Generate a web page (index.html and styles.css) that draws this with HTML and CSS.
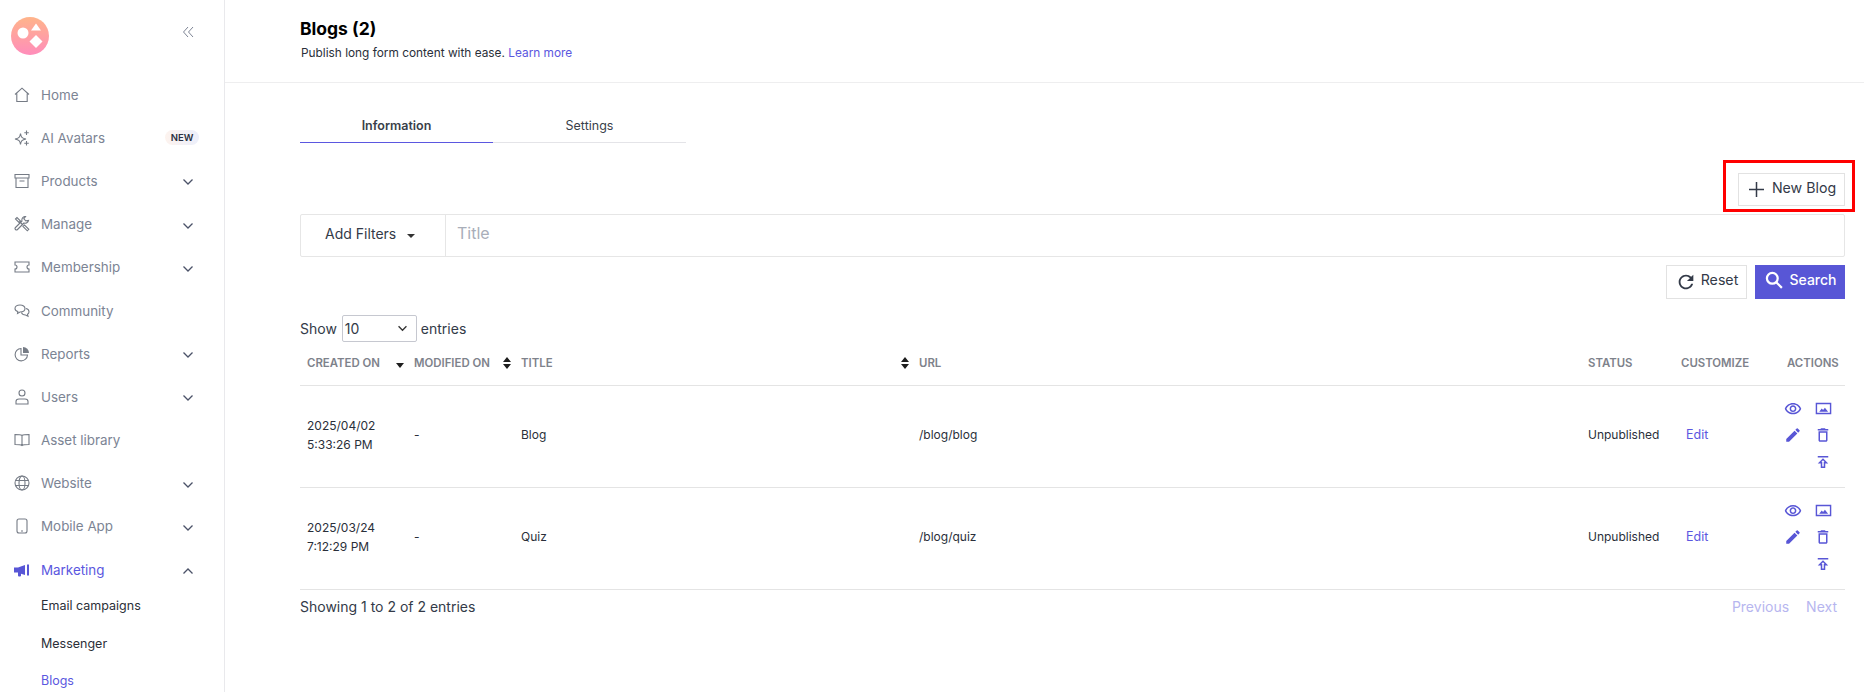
FILE: index.html
```html
<!DOCTYPE html>
<html lang="en">
<head>
<meta charset="utf-8">
<title>Blogs</title>
<link rel="stylesheet" href="styles.css">
</head>
<body>
<svg width="0" height="0" class="defs">
  <symbol id="chev-d" viewBox="0 0 12 8"><path d="M1.500 1.500 6 6l4.500-4.500" fill="none" stroke="#4b5268" stroke-width="1.300"/></symbol>
  <symbol id="chev-u" viewBox="0 0 12 8"><path d="M1.500 6.500 6 2l4.500 4.500" fill="none" stroke="#4b5268" stroke-width="1.300"/></symbol>
  <symbol id="eye" viewBox="0 0 24 24"><path d="M12 6c3.790 0 7.170 2.130 8.820 5.500C19.170 14.870 15.790 17 12 17s-7.170-2.130-8.820-5.500C4.830 8.130 8.210 6 12 6m0-2C7 4 2.730 7.110 1 11.500 2.730 15.890 7 19 12 19s9.270-3.110 11-7.500C21.270 7.110 17 4 12 4zm0 5c1.380 0 2.500 1.120 2.500 2.500S13.380 14 12 14s-2.500-1.120-2.500-2.500S10.620 9 12 9m0-2c-2.480 0-4.500 2.020-4.500 4.500S9.520 16 12 16s4.500-2.020 4.500-4.500S14.480 7 12 7z"/></symbol>
  <symbol id="pano" viewBox="0 0 24 24"><path d="M23 4H1v16h22zm-2 14H3V6h18zM14 11l-2.600 3.200L9.500 12 6 16.500h12.500z"/></symbol>
  <symbol id="edit" viewBox="0 0 24 24"><path d="M3 17.250V21h3.750L17.810 9.940l-3.750-3.750L3 17.250zM20.710 7.040a.996.996 0 000-1.410l-2.340-2.340a.996.996 0 00-1.410 0l-1.830 1.830 3.750 3.750 1.830-1.830z"/></symbol>
  <symbol id="trash" viewBox="0 0 24 24"><path d="M16 9v10H8V9h8m-1.500-6h-5l-1 1H5v2h14V4h-3.500l-1-1zM18 7H6v12c0 1.100.9 2 2 2h8c1.100 0 2-.9 2-2V7z"/></symbol>
  <symbol id="pub" viewBox="0 0 24 24"><path d="M5 4h14v2H5zm0 10h4v6h6v-6h4l-7-7-7 7zm8-2v6h-2v-6H9.830L12 9.830 14.170 12H13z"/></symbol>
  <symbol id="sort" viewBox="0 0 8 12"><path d="M4 0 8 5H0zM0 7h8l-4 5z"/></symbol>
</svg>

<div class="app">
  <aside class="sidebar">
    <div class="brand">
      <svg class="logo" viewBox="0 0 38 38">
        <defs><linearGradient id="lg" x1="0" y1="0" x2="0" y2="1"><stop offset="0" stop-color="#ffb48a"/><stop offset="1" stop-color="#ff8dbb"/></linearGradient></defs>
        <circle cx="19" cy="19" r="19" fill="url(#lg)"/>
        <circle cx="12" cy="16" r="5.500" fill="#fff"/>
        <path d="M25 6.500 30 13.500H20z" fill="#fff"/>
        <path d="M25 18 31.500 24.500 25 31 18.500 24.500z" fill="#fff"/>
      </svg>
      <svg class="collapse" viewBox="0 0 12 12"><path d="M6 1 1.500 6 6 11M11 1 6.500 6 11 11" fill="none" stroke="#7d8494" stroke-width="1"/></svg>
    </div>
    <nav class="nav">
      <a class="nav-item"><svg class="ni" viewBox="0 0 16 16"><path d="M1 7.500 8 1.200l7 6.300M2.800 6.500v8h10.400v-8"/></svg><span class="nl">Home</span></a>
      <a class="nav-item"><svg class="ni" viewBox="0 0 16 16"><path d="M6.500 3.500C7 7 8 8.300 12 9c-4 .7-5 2-5.500 5.500C6 11 5 9.700 1 9c4-.7 5-2 5.500-5.500zM12.500 .5v4.500M10.300 2.700h4.500M12.500 11v4.500M10.300 13.200h4.500"/></svg><span class="nl">AI Avatars</span><span class="badge">NEW</span></a>
      <a class="nav-item"><svg class="ni" viewBox="0 0 16 16"><path d="M1 1.500h14v3.500H1zM2 5v9.500h12V5M5.500 8h5"/></svg><span class="nl">Products</span><svg class="chev"><use href="#chev-d"/></svg></a>
      <a class="nav-item"><svg class="ni" viewBox="0 0 16 16"><path d="M1.500 3 3 1.500 6.500 5 5 6.500zM6.500 6.500 9 9M9 10.500 10.500 9l4.300 4.300-1.500 1.500zM14.500 4.500a3.500 3.500 0 0 1-4.500 2.500l-6.500 6.500a1.400 1.400 0 0 1-2-2L8 5a3.500 3.500 0 0 1 3.500-4.500L9.800 2.800l2 2z"/></svg><span class="nl">Manage</span><svg class="chev"><use href="#chev-d"/></svg></a>
      <a class="nav-item"><svg class="ni" viewBox="0 0 16 16"><path d="M1 3h14v3a2 2 0 0 0 0 4v3H1v-3a2 2 0 0 0 0-4z"/></svg><span class="nl">Membership</span><svg class="chev"><use href="#chev-d"/></svg></a>
      <a class="nav-item"><svg class="ni" viewBox="0 0 16 16"><path d="M6 2c3 0 5 1.500 5 3.500S9 9 6 9L3.500 10.500 3.800 8.500C2 8 1 7 1 5.500 1 3.500 3 2 6 2zM12 5.500c2 .5 3 1.700 3 3.200 0 1.200-.6 2-1.500 2.600l.5 2-2.500-1.300c-2 0-3.500-.8-4-2.300"/></svg><span class="nl">Community</span></a>
      <a class="nav-item"><svg class="ni" viewBox="0 0 16 16"><path d="M7 2.500a6.200 6.200 0 1 0 6.500 6.500H7z"/><path class="fill" d="M9 1v6h6a6 6 0 0 0-6-6z"/></svg><span class="nl">Reports</span><svg class="chev"><use href="#chev-d"/></svg></a>
      <a class="nav-item"><svg class="ni" viewBox="0 0 16 16"><circle cx="8" cy="4" r="3"/><path d="M2 15v-2.500C2 11 3.500 10 5 10h6c1.500 0 3 1 3 2.500V15z"/></svg><span class="nl">Users</span><svg class="chev"><use href="#chev-d"/></svg></a>
      <a class="nav-item"><svg class="ni" viewBox="0 0 16 16"><path d="M8 3.500C7 2.800 5.500 2.500 1 2.500v10c4.500 0 6 .3 7 1 1-.7 2.500-1 7-1v-10c-4.500 0-6 .3-7 1zM8 3.500v10"/></svg><span class="nl">Asset library</span></a>
      <a class="nav-item"><svg class="ni" viewBox="0 0 16 16"><circle cx="8" cy="8" r="7"/><ellipse cx="8" cy="8" rx="3" ry="7"/><path d="M1.500 5.500h13M1.500 10.500h13"/></svg><span class="nl">Website</span><svg class="chev"><use href="#chev-d"/></svg></a>
      <a class="nav-item"><svg class="ni" viewBox="0 0 16 16"><rect x="3" y="1" width="10" height="14" rx="2"/><path d="M7 13h2"/></svg><span class="nl">Mobile App</span><svg class="chev"><use href="#chev-d"/></svg></a>
      <a class="nav-item active"><svg class="ni-solid" viewBox="0 0 16 16"><path d="M0 5.500h4L11 3v10L7 11.800v1.700a1 1 0 0 1-1 1H5a1 1 0 0 1-1-1v-3H0zM13 2.500h2v11h-2z"/></svg><span class="nl">Marketing</span><svg class="chev"><use href="#chev-u"/></svg></a>
    </nav>
    <div class="subnav">
      <a class="sub-item">Email campaigns</a>
      <a class="sub-item">Messenger</a>
      <a class="sub-item current">Blogs</a>
    </div>
  </aside>

  <main class="main">
    <header class="page-head">
      <h1>Blogs (2)</h1>
      <p>Publish long form content with ease. <a class="link">Learn more</a></p>
    </header>
    <section class="content">
      <div class="tabs">
        <div class="tab on">Information</div>
        <div class="tab">Settings</div>
      </div>
      <div class="new-row">
        <div class="highlight">
          <button class="btn btn-new"><svg class="plus" viewBox="0 0 14 14"><path d="M7 0v14M0 7h14"/></svg>New Blog</button>
        </div>
      </div>
      <div class="filters">
        <div class="filter-drop">Add Filters<span class="caret"></span></div>
        <div class="filter-input">Title</div>
      </div>
      <div class="filter-actions">
        <button class="btn btn-reset"><svg class="ic-reset" viewBox="0 0 24 24"><path d="M17.650 6.350C16.200 4.900 14.210 4 12 4c-4.420 0-7.990 3.580-7.990 8s3.570 8 7.990 8c3.730 0 6.840-2.550 7.730-6h-2.080c-.82 2.330-3.040 4-5.650 4-3.310 0-6-2.690-6-6s2.690-6 6-6c1.660 0 3.140.69 4.220 1.780L13 11h7V4l-2.350 2.350z"/></svg>Reset</button>
        <button class="btn btn-search"><svg class="ic-search" viewBox="0 0 16 16"><circle cx="6.500" cy="6.500" r="4.800"/><path d="M10 10l5 5"/></svg>Search</button>
      </div>
      <div class="length">Show <span class="select">10<svg viewBox="0 0 12 8"><path d="M1.500 1.500 6 6l4.500-4.500" fill="none" stroke="#333" stroke-width="1.500"/></svg></span> entries</div>
      <table class="grid">
        <colgroup><col class="c1"><col class="c2"><col class="c3"><col class="c4"><col class="c5"><col class="c6"><col class="c7"></colgroup>
        <thead>
          <tr>
            <th><span class="th-in">CREATED ON<span class="sort-down"></span></span></th>
            <th><span class="th-in">MODIFIED ON<svg class="sort"><use href="#sort"/></svg></span></th>
            <th><span class="th-in">TITLE<svg class="sort"><use href="#sort"/></svg></span></th>
            <th>URL</th>
            <th>STATUS</th>
            <th>CUSTOMIZE</th>
            <th>ACTIONS</th>
          </tr>
        </thead>
        <tbody>
          <tr>
            <td>2025/04/02<br>5:33:26 PM</td><td>-</td><td>Blog</td><td>/blog/blog</td><td>Unpublished</td><td><a class="link edit">Edit</a></td>
            <td class="act-cell"><div class="actions">
              <svg class="a-eye"><use href="#eye"/></svg><svg class="a-pano"><use href="#pano"/></svg>
              <svg class="a-ic"><use href="#edit"/></svg><svg class="a-ic"><use href="#trash"/></svg>
              <span></span><svg class="a-ic"><use href="#pub"/></svg>
            </div></td>
          </tr>
          <tr>
            <td>2025/03/24<br>7:12:29 PM</td><td>-</td><td>Quiz</td><td>/blog/quiz</td><td>Unpublished</td><td><a class="link edit">Edit</a></td>
            <td class="act-cell"><div class="actions">
              <svg class="a-eye"><use href="#eye"/></svg><svg class="a-pano"><use href="#pano"/></svg>
              <svg class="a-ic"><use href="#edit"/></svg><svg class="a-ic"><use href="#trash"/></svg>
              <span></span><svg class="a-ic"><use href="#pub"/></svg>
            </div></td>
          </tr>
        </tbody>
      </table>
      <div class="foot">
        <span>Showing 1 to 2 of 2 entries</span>
        <span class="pager"><a>Previous</a><a>Next</a></span>
      </div>
    </section>
  </main>
</div>
</body>
</html>
```
FILE: styles.css
```css
* { box-sizing: border-box; }
html, body { margin: 0; height: 100%; overflow: hidden; background: #fff; }
body { font-family: Inter, "Liberation Sans", sans-serif; font-size: 13px; color: #2a2f3a; }
.defs { position: absolute; }
.app { display: flex; height: 692px; overflow: hidden; }

.sidebar { width: 225px; flex: none; border-right: 1px solid #e9e9ec; height: 692px; overflow: hidden; }
.brand { height: 73px; display: flex; align-items: flex-start; justify-content: space-between; padding: 17px 30px 0 11px; }
.logo { width: 38px; height: 38px; }
.collapse { width: 12px; height: 12px; margin-top: 9px; }
.nav { display: flex; flex-direction: column; }
.nav-item { height: 43.200px; display: flex; align-items: center; padding: 0 30px 0 14px; color: #7c8494; font-size: 13.400px; }
.nl { flex: 1; margin-left: 11px; }
.ni { width: 16px; height: 16px; flex: none; fill: none; stroke: #757b85; stroke-width: 1.100; }
.ni .fill { fill: #757b85; stroke: none; }
.ni-solid { width: 16px; height: 16px; flex: none; fill: #5856d6; }
.chev { width: 12px; height: 8px; flex: none; margin-top: 3px; }
.badge { width: 34px; height: 15px; margin-right: -5px; border-radius: 8px; background: linear-gradient(90deg, #fdf3ee, #eceffb); color: #2b3042; font-size: 9.500px; font-weight: 600; line-height: 15px; text-align: center; }
.active, .active .nl { color: #5b57e0; }
.subnav { display: flex; flex-direction: column; margin-top: -4px; }
.sub-item { height: 37.500px; line-height: 37.500px; padding-left: 41px; font-size: 12.500px; color: #2b2f38; }
.current { color: #5b57e0; }

.main { flex: 1; min-width: 0; }
.page-head { height: 83px; padding: 18px 0 0 76px; border-bottom: 1px solid #eeeeef; }
.page-head h1 { margin: 0 0 0 -1px; font-size: 17.500px; font-weight: 700; line-height: 22px; color: #000; }
.page-head p { margin: 5px 0 0; font-size: 11.850px; line-height: 16px; color: #2a2f3a; }
.link { color: #5b57e0; }
.content { padding: 22px 19px 0 75px; }
.tabs { display: flex; width: 386px; border-bottom: 1px solid #e4e4e8; height: 38px; }
.tab { width: 193px; height: 38px; line-height: 41px; text-align: center; font-size: 12.500px; color: #3a3f4a; }
.tab.on { font-weight: 600; border-bottom: 1.500px solid #5b57e0; }

.new-row { display: flex; justify-content: flex-end; height: 71px; margin-right: -10px; padding-top: 17px; }
.highlight { border: 3px solid #f00; width: 132px; height: 52px; padding: 10px 7px 0 12px; }
.btn { display: inline-flex; align-items: center; justify-content: center; font: inherit; background: #fff; border: 1px solid #e2e2e2; color: #333a48; padding: 0 0 4px; }
.btn svg { margin-top: 4px; }
.btn-new { width: 107px; height: 33px; font-size: 14.200px; padding-left: 2px; padding-bottom: 5px; }
.plus { width: 15px; height: 15px; margin-right: 8px; fill: none; stroke: #333a48; stroke-width: 1.400; }
.filters { display: flex; height: 43px; border: 1px solid #e6e6e6; border-radius: 2px; }
.filter-drop { width: 145px; border-right: 1px solid #e6e6e6; display: flex; align-items: center; padding: 0 0 5px 24px; font-size: 14px; color: #333a48; }
.caret { width: 0; height: 0; margin: 6px 0 0 11px; border-left: 4.500px solid transparent; border-right: 4.500px solid transparent; border-top: 4.500px solid #333; }
.filter-input { flex: 1; display: flex; align-items: center; padding: 0 0 5px 11px; font-size: 16px; color: #a9aeb9; }
.filter-actions { display: flex; justify-content: flex-end; gap: 8px; margin-top: 8px; height: 34px; }
.btn-reset { width: 81px; font-size: 14.200px; padding-bottom: 5px; }
.ic-reset { width: 22px; height: 22px; margin-right: 4px; fill: #333a48; }
.btn-search { width: 90px; font-size: 14px; font-weight: 500; color: #fff; background: #5856d6; border-color: #5856d6; padding-left: 2px; padding-bottom: 5px; }
.btn-search svg { margin-top: 0; }
.ic-search { width: 18px; height: 18px; margin-right: 6px; fill: none; stroke: #fff; stroke-width: 2; }
.length { margin-top: 15px; height: 28px; display: flex; align-items: center; gap: 4px; font-size: 14px; color: #333a48; }
.select { width: 75px; height: 27px; margin: 0 0 0 1px; padding: 0 8px 0 2px; display: flex; align-items: center; justify-content: space-between; border: 1px solid #c6c8d0; border-radius: 2px; }
.select svg { width: 11px; height: 7px; }

.grid { width: 100%; table-layout: fixed; border-collapse: collapse; margin-top: 7px; }
.c1 { width: 107px; } .c2 { width: 107px; } .c3 { width: 398px; } .c4 { width: 669px; }
.c5 { width: 93px; } .c6 { width: 106px; } .c7 { width: 65px; }
th { height: 36px; padding: 0 0 7px 7px; text-align: left; font-size: 11.400px; font-weight: 600; color: #7e828b; border-bottom: 1px solid #e4e4e4; white-space: nowrap; }
td { height: 102px; padding: 0 0 3px 7px; font-size: 12px; line-height: 19px; color: #2a2f3a; border-bottom: 1px solid #e4e4e4; }
td.act-cell { padding-bottom: 2px; }
.th-in { display: flex; align-items: center; justify-content: space-between; padding-right: 3px; }
.sort { width: 8px; height: 12px; fill: #1e1e1e; }
.sort-down { width: 0; height: 0; margin-top: 5px; border-left: 4.500px solid transparent; border-right: 4.500px solid transparent; border-top: 5px solid #1e1e1e; }
.edit { padding-left: 5px; font-size: 12.500px; }
.actions { display: grid; grid-template-columns: 30px 30px; grid-auto-rows: 26.500px; align-items: center; justify-items: center; margin-left: -9px; fill: #5856d6; }
.a-eye { width: 18px; height: 18px; }
.a-pano { width: 17px; height: 17px; }
.a-ic { width: 18px; height: 18px; }
.foot { display: flex; justify-content: space-between; align-items: center; height: 34px; font-size: 14px; color: #333a48; }
.pager { display: flex; gap: 17px; padding-right: 8px; color: #b7b6ef; }
```
